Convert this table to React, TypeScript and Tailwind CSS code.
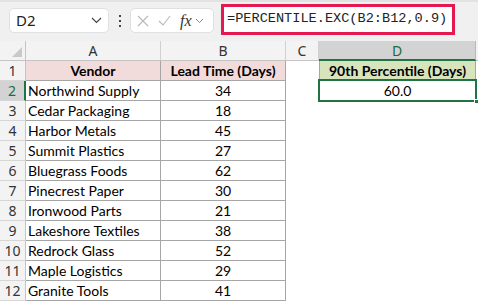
import React from "react";

const rows: [string, number][] = [
  ["Northwind Supply", 34],
  ["Cedar Packaging", 18],
  ["Harbor Metals", 45],
  ["Summit Plastics", 27],
  ["Bluegrass Foods", 62],
  ["Pinecrest Paper", 30],
  ["Ironwood Parts", 21],
  ["Lakeshore Textiles", 38],
  ["Redrock Glass", 52],
  ["Maple Logistics", 29],
  ["Granite Tools", 41],
];

const cellFont = { fontFamily: "Lato, 'Liberation Sans', sans-serif" };
const uiFont = { fontFamily: "'Noto Sans', 'Open Sans', sans-serif" };

function Chevron() {
  return (
    <svg width="11" height="7" viewBox="0 0 11 7" fill="none">
      <path d="M1 1l4.5 4.5L10 1" stroke="#444" strokeWidth="1.2" />
    </svg>
  );
}

function RowHead({ n, active }: { n: number; active?: boolean }) {
  return (
    <div
      className={`w-[26px] h-[20px] shrink-0 flex items-center justify-center text-[14px] border-b border-b-[#d6d6d6] ${
        active
          ? "bg-[#d3d3d3] text-[#1e6b3c] border-r-2 border-r-[#217346]"
          : "bg-[#f3f3f3] text-[#333] border-r border-r-[#c4c4c4]"
      }`}
      style={uiFont}
    >
      {n}
    </div>
  );
}

export default function App() {
  return (
    <div className="w-[478px] h-[302px] overflow-hidden bg-white">
      {/* FORMULA BAR */}
      <div className="h-[41px] bg-[#f0f0f0] border-t-2 border-t-[#e2e2e2] flex items-start">
        <div
          className="mt-[6px] ml-[9px] w-[100px] h-[25px] bg-white rounded-[5px] border border-[#e0e0e0] flex items-center justify-between pl-[6px] pr-[6px] text-[15px] text-[#222]"
          style={uiFont}
        >
          <span>D2</span>
          <Chevron />
        </div>
        <div className="mt-[13px] ml-[10px] w-[2px] flex flex-col gap-[3px]">
          <div className="w-[2px] h-[2px] bg-[#444]" />
          <div className="w-[2px] h-[2px] bg-[#444]" />
          <div className="w-[2px] h-[2px] bg-[#444]" />
        </div>
        <div className="mt-[6px] ml-[9px] w-[84px] h-[25px] bg-white rounded-[5px] border border-[#e0e0e0] flex items-center pl-[6px] gap-[9px]">
          <svg width="12" height="12" viewBox="0 0 12 12">
            <path d="M1 1l10 10M11 1L1 11" stroke="#b8b8b8" strokeWidth="1.1" />
          </svg>
          <svg width="13" height="11" viewBox="0 0 13 11">
            <path d="M1 6l4 4L12 1" stroke="#b8b8b8" strokeWidth="1.1" fill="none" />
          </svg>
          <div className="flex items-center gap-[3px]">
            <span
              className="italic text-[16px] text-[#333] leading-none"
              style={{ fontFamily: "'Liberation Serif', serif" }}
            >
              fx
            </span>
            <svg width="9" height="6" viewBox="0 0 9 6" fill="none">
              <path d="M1 1l3.5 3.5L8 1" stroke="#888" strokeWidth="1" />
            </svg>
          </div>
        </div>
        <div
          className="mt-[2px] ml-[7px] w-[234px] h-[31px] bg-white border-[3px] border-[#e3194f] flex items-center pl-[3px] text-[13.6px] text-[#222]"
          style={{ fontFamily: "'Liberation Mono', monospace" }}
        >
          =PERCENTILE.EXC(B2:B12,0.9)
        </div>
      </div>

      {/* COLUMN HEADERS */}
      <div className="flex h-[20px] text-[14px] text-[#333]" style={uiFont}>
        <div className="w-[26px] shrink-0 bg-[#f3f3f3] border-r border-r-[#c4c4c4] border-b border-b-[#c4c4c4] flex items-end justify-end pr-[3px] pb-[3px]">
          <div className="w-0 h-0 border-l-[10px] border-l-transparent border-b-[10px] border-b-[#c9c9c9]" />
        </div>
        <div className="w-[135px] shrink-0 bg-[#f3f3f3] border-r border-r-[#d0d0d0] border-b border-b-[#c4c4c4] flex items-center justify-center">A</div>
        <div className="w-[125px] shrink-0 bg-[#f3f3f3] border-r border-r-[#d0d0d0] border-b border-b-[#c4c4c4] flex items-center justify-center">B</div>
        <div className="w-[33px] shrink-0 bg-[#f3f3f3] border-r border-r-[#d0d0d0] border-b border-b-[#c4c4c4] flex items-center justify-center">C</div>
        <div className="w-[157px] shrink-0 bg-[#d3d3d3] text-[#1e6b3c] border-r border-r-[#b8b8b8] border-b-2 border-b-[#217346] flex items-center justify-center">D</div>
        <div className="flex-1 bg-[#f3f3f3] border-b border-b-[#c4c4c4]" />
      </div>

      {/* ROW 1 */}
      <div className="flex text-[14px] text-black" style={cellFont}>
        <RowHead n={1} />
        <div className="w-[135px] h-[20px] shrink-0 bg-[#f2dcdb] border-r border-b border-[#a6a6a6] flex items-center justify-center font-bold">
          Vendor
        </div>
        <div className="w-[125px] h-[20px] shrink-0 bg-[#f2dcdb] border-r border-b border-[#a6a6a6] flex items-center justify-center font-bold">
          Lead Time (Days)
        </div>
        <div className="w-[33px] h-[20px] shrink-0" />
        <div className="w-[157px] h-[20px] shrink-0 bg-[#d8e4bc] border-l border-r border-b border-[#a6a6a6] flex items-center justify-center font-bold">
          90th Percentile (Days)
        </div>
      </div>

      {/* DATA ROWS */}
      {rows.map(([name, days], i) => (
        <div key={name} className="flex text-[14px] text-black" style={cellFont}>
          <RowHead n={i + 2} active={i === 0} />
          <div className="w-[135px] h-[20px] shrink-0 border-r border-b border-[#a6a6a6] flex items-center pl-[2px]">
            {name}
          </div>
          <div className="w-[125px] h-[20px] shrink-0 border-r border-b border-[#a6a6a6] flex items-center justify-center">
            {days}
          </div>
          <div className="w-[33px] h-[20px] shrink-0" />
          {i === 0 && (
            <div className="relative w-[157px] h-[20px] shrink-0 border-l border-r border-b border-[#a6a6a6] flex items-center justify-center">
              60.0
              <div className="absolute -left-[2px] -top-[2px] -right-[2px] -bottom-[2px] border-2 border-[#217346]" />
              <div className="absolute -right-[4px] -bottom-[4px] w-[5px] h-[5px] bg-[#217346] border border-white" />
            </div>
          )}
        </div>
      ))}
    </div>
  );
}
